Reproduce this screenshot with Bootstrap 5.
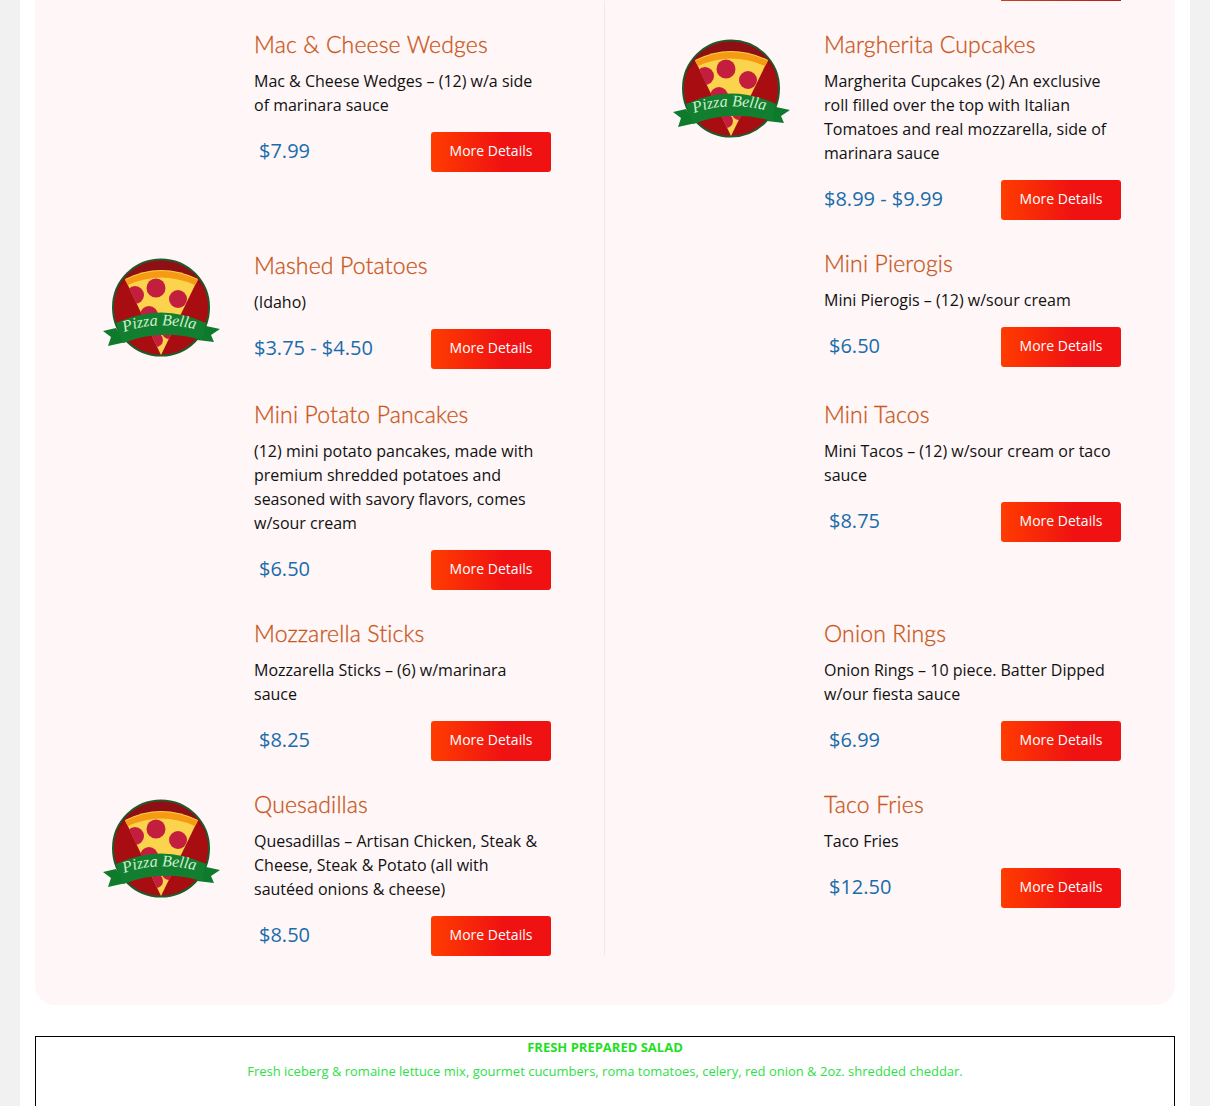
<!DOCTYPE html>
<html lang="en">
<head>
<meta charset="utf-8">
<title>Menu</title>
<link href="https://cdn.jsdelivr.net/npm/bootstrap@5.3.0/dist/css/bootstrap.min.css" rel="stylesheet">
<style>
html,body{margin:0;background:#f1f1f1;font-family:"Open Sans",sans-serif;color:#111;overflow:hidden}
.page-wrap{width:1170px;margin:0 20px;background:#fff;padding:0 15px;height:1106px;overflow:hidden}
.menu-panel{background:#fef6f7;border-radius:0 0 20px 20px;padding-bottom:49px}
.sliver-row{height:1px}
.sliver{width:120px;height:1px;margin-left:966px;background:linear-gradient(90deg,#c4441c,#b81c1c)}
.menu-cols{display:grid;grid-template-columns:570px 570px}
.menu-cols>.menu-item:nth-child(odd){border-right:1px solid #efe9ea}
.menu-item{display:flex;padding-top:29px;padding-left:68px}
.mi-mid{min-height:151px}
.nudge{padding-top:31px}
.logo-cell{width:151px;flex:none;margin-top:3px}
.nudge .logo-cell{margin-top:1px}
.logo{display:block;width:132px;height:112px;margin-left:-7px}
.text-cell{width:297px}
.item-title{font-family:Lato,sans-serif;font-weight:300;-webkit-text-stroke:.3px #c9561a;font-size:23px;line-height:28px;color:#c9561a;margin:0 0 11px;letter-spacing:.15px}
.item-desc{font-size:16px;line-height:24px;margin:0 0 15px;color:#111}
.price-line{display:flex;justify-content:space-between;align-items:center;height:40px}
.item-price{font-size:20px;color:#1a6cab;position:relative;top:-1px}
.item-price.pad{padding-left:5px}
.more-btn{width:120px;height:40px;display:flex;align-items:center;justify-content:center;padding:0 0 3px;border:0;border-radius:3px;font-size:14px;color:#fff;background:linear-gradient(90deg,#ff3c00 0%,#f01212 60%,#f01212 100%)}
.more-btn:hover{color:#fff}
.salad-box{margin-top:31px;border:1px solid #000;height:120px;text-align:center;font-size:13px;color:#2fe04a;padding-top:1px}
.salad-box b{display:block;line-height:18px;font-weight:700;color:#1fe01f}
.salad-box span{display:block;line-height:18px;margin-top:6px}
</style>
</head>
<body>
<svg width="0" height="0" class="position-absolute">
  <defs>
    <symbol id="pizza-logo" viewBox="0 0 132 112">
      <circle cx="65" cy="55.5" r="48" fill="#a80d12" stroke="#1f5a2a" stroke-width="2"/>
      <path d="M20 40 A48 48 0 0 1 110 40 L100 28 Q65 12 30 28Z" fill="#8e1014"/>
      <path d="M29 27 Q65 9 102 27 L65 103Z" fill="#fcd34d"/>
      <path d="M29 28 Q65 10 102 28 L99 33 Q65 18 32 33Z" fill="#f59a12"/>
      <clipPath id="slice"><path d="M31 32 Q65 18 100 32 L65 103Z"/></clipPath>
      <g clip-path="url(#slice)" fill="#c41e3f">
        <circle cx="60" cy="36" r="9.5"/><circle cx="82" cy="47" r="9"/><circle cx="39" cy="43" r="9"/><circle cx="53" cy="63" r="9"/><circle cx="60" cy="88" r="7"/><circle cx="73" cy="80" r="7"/>
      </g>
      <path d="M20 76 L7 79 L15 85 L12 94 L30 90Z" fill="#0e7a2c"/>
      <path d="M110 74 L124 77 L115 83 L118 90 L101 88Z" fill="#0e7a2c"/>
      <path d="M20 71 Q65 50 110 71 L106 88 Q65 76 27 91Z" fill="#127f30"/>
      <path id="ribbon-arc" d="M28 80 Q65 67 106 79" fill="none"/>
      <text font-family="'Liberation Serif',serif" font-style="italic" font-size="16" fill="#d3efcf"><textPath href="#ribbon-arc">Pizza Bella</textPath></text>
    </symbol>
  </defs>
</svg>
<div class="page-wrap">
  <div class="menu-panel">
    <div class="sliver-row"><div class="sliver"></div></div>
    <div class="menu-cols">

      <div class="menu-item">
        <div class="logo-cell"></div>
        <div class="text-cell">
          <h3 class="item-title">Mac &amp; Cheese Wedges</h3>
          <p class="item-desc">Mac &amp; Cheese Wedges – (12) w/a side of marinara sauce</p>
          <div class="price-line"><span class="item-price pad">$7.99</span><a class="btn more-btn" href="#">More Details</a></div>
        </div>
      </div>
      <div class="menu-item">
        <div class="logo-cell"><svg class="logo"><use href="#pizza-logo"/></svg></div>
        <div class="text-cell">
          <h3 class="item-title">Margherita Cupcakes</h3>
          <p class="item-desc">Margherita Cupcakes (2) An exclusive roll filled over the top with Italian Tomatoes and real mozzarella, side of marinara sauce</p>
          <div class="price-line"><span class="item-price">$8.99 - $9.99</span><a class="btn more-btn" href="#">More Details</a></div>
        </div>
      </div>

      <div class="menu-item mi-mid nudge">
        <div class="logo-cell"><svg class="logo"><use href="#pizza-logo"/></svg></div>
        <div class="text-cell">
          <h3 class="item-title">Mashed Potatoes</h3>
          <p class="item-desc">(Idaho)</p>
          <div class="price-line"><span class="item-price">$3.75 - $4.50</span><a class="btn more-btn" href="#">More Details</a></div>
        </div>
      </div>
      <div class="menu-item mi-mid">
        <div class="logo-cell"></div>
        <div class="text-cell">
          <h3 class="item-title">Mini Pierogis</h3>
          <p class="item-desc">Mini Pierogis – (12) w/sour cream</p>
          <div class="price-line"><span class="item-price pad">$6.50</span><a class="btn more-btn" href="#">More Details</a></div>
        </div>
      </div>

      <div class="menu-item">
        <div class="logo-cell"></div>
        <div class="text-cell">
          <h3 class="item-title">Mini Potato Pancakes</h3>
          <p class="item-desc">(12) mini potato pancakes, made with premium shredded potatoes and seasoned with savory flavors, comes w/sour cream</p>
          <div class="price-line"><span class="item-price pad">$6.50</span><a class="btn more-btn" href="#">More Details</a></div>
        </div>
      </div>
      <div class="menu-item">
        <div class="logo-cell"></div>
        <div class="text-cell">
          <h3 class="item-title">Mini Tacos</h3>
          <p class="item-desc">Mini Tacos – (12) w/sour cream or taco sauce</p>
          <div class="price-line"><span class="item-price pad">$8.75</span><a class="btn more-btn" href="#">More Details</a></div>
        </div>
      </div>

      <div class="menu-item">
        <div class="logo-cell"></div>
        <div class="text-cell">
          <h3 class="item-title">Mozzarella Sticks</h3>
          <p class="item-desc">Mozzarella Sticks – (6) w/marinara sauce</p>
          <div class="price-line"><span class="item-price pad">$8.25</span><a class="btn more-btn" href="#">More Details</a></div>
        </div>
      </div>
      <div class="menu-item">
        <div class="logo-cell"></div>
        <div class="text-cell">
          <h3 class="item-title">Onion Rings</h3>
          <p class="item-desc">Onion Rings – 10 piece. Batter Dipped w/our fiesta sauce</p>
          <div class="price-line"><span class="item-price pad">$6.99</span><a class="btn more-btn" href="#">More Details</a></div>
        </div>
      </div>

      <div class="menu-item">
        <div class="logo-cell"><svg class="logo"><use href="#pizza-logo"/></svg></div>
        <div class="text-cell">
          <h3 class="item-title">Quesadillas</h3>
          <p class="item-desc">Quesadillas – Artisan Chicken, Steak &amp; Cheese, Steak &amp; Potato (all with sautéed onions &amp; cheese)</p>
          <div class="price-line"><span class="item-price pad">$8.50</span><a class="btn more-btn" href="#">More Details</a></div>
        </div>
      </div>
      <div class="menu-item">
        <div class="logo-cell"></div>
        <div class="text-cell">
          <h3 class="item-title">Taco Fries</h3>
          <p class="item-desc">Taco Fries</p>
          <div class="price-line"><span class="item-price pad">$12.50</span><a class="btn more-btn" href="#">More Details</a></div>
        </div>
      </div>

    </div>
  </div>
  <div class="salad-box">
    <b>FRESH PREPARED SALAD</b>
    <span>Fresh iceberg &amp; romaine lettuce mix, gourmet cucumbers, roma tomatoes, celery, red onion &amp; 2oz. shredded cheddar.</span>
  </div>
</div>
<script src="https://cdn.jsdelivr.net/npm/bootstrap@5.3.0/dist/js/bootstrap.bundle.min.js"></script>
</body>
</html>
